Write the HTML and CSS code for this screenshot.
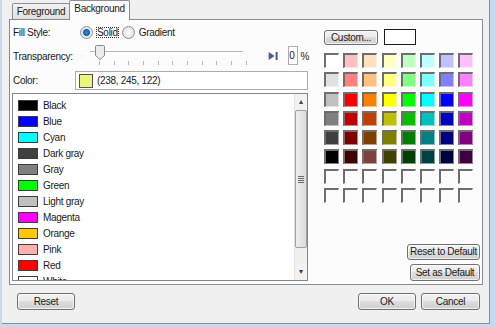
FILE: index.html
```html
<!DOCTYPE html>
<html lang="en">
<head>
    <meta charset="UTF-8">
    <title>Fill settings</title>
    <link rel="stylesheet" href="styles.css">
</head>
<body>
<div class="frame">
    <div class="dialog">
        <div class="tabs">
            <div class="tab">Foreground</div>
            <div class="tab active">Background</div>
        </div>

        <div class="pane">
            <div class="left">
                <div class="row fill">
                    <span class="label">Fill Style:</span>
                    <span class="radio on"></span>
                    <span class="opt focus">Solid</span>
                    <span class="radio"></span>
                    <span class="opt">Gradient</span>
                </div>

                <div class="row trans">
                    <span class="label">Transparency:</span>
                    <svg class="end" width="9" height="8" viewBox="0 0 9 8">
                        <rect x="0" y="0" width="2" height="8" fill="#a8a8a8"/>
                        <polygon points="9,0 9,8 3,4" fill="#a8a8a8"/>
                    </svg>
                    <div class="slider">
                        <div class="track"></div>
                        <svg class="thumb" width="10" height="15" viewBox="0 0 10 15">
                            <path d="M0.5 1.5 Q0.5 0.5 1.5 0.5 L8.5 0.5 Q9.5 0.5 9.5 1.5 L9.5 10.5 L5 14.5 L0.5 10.5 Z" fill="#ececec" stroke="#8a8a8a"/>
                        </svg>
                        <div class="ticks">
                            <i></i><i></i><i></i><i></i><i></i><i></i><i></i><i></i><i></i><i></i><i></i>
                        </div>
                    </div>
                    <svg class="end right" width="9" height="8" viewBox="0 0 9 8">
                        <polygon points="0,0 0,8 6,4" fill="#4f5b8c"/>
                        <rect x="7" y="0" width="2" height="8" fill="#4f5b8c"/>
                    </svg>
                    <div class="num">0</div>
                    <span class="pct">%</span>
                </div>

                <div class="row color">
                    <span class="label">Color:</span>
                    <div class="colorbox">
                        <span class="chip" style="background: rgb(238, 245, 122)"></span>
                        <span>(238, 245, 122)</span>
                    </div>
                </div>

                <div class="list">
                    <div class="items">
                        <div class="item"><span class="sw" style="background:#000000"></span>Black</div>
                        <div class="item"><span class="sw" style="background:#0000ff"></span>Blue</div>
                        <div class="item"><span class="sw" style="background:#00ffff"></span>Cyan</div>
                        <div class="item"><span class="sw" style="background:#404040"></span>Dark gray</div>
                        <div class="item"><span class="sw" style="background:#808080"></span>Gray</div>
                        <div class="item"><span class="sw" style="background:#00ff00"></span>Green</div>
                        <div class="item"><span class="sw" style="background:#c0c0c0"></span>Light gray</div>
                        <div class="item"><span class="sw" style="background:#ff00ff"></span>Magenta</div>
                        <div class="item"><span class="sw" style="background:#ffc800"></span>Orange</div>
                        <div class="item"><span class="sw" style="background:#ffafaf"></span>Pink</div>
                        <div class="item"><span class="sw" style="background:#ff0000"></span>Red</div>
                        <div class="item"><span class="sw" style="background:#ffffff"></span>White</div>
                    </div>
                    <div class="scroll">
                        <div class="arrow">&#9652;</div>
                        <div class="sthumb"><span class="grip"></span></div>
                        <div class="strack"></div>
                        <div class="arrow">&#9662;</div>
                    </div>
                </div>
            </div>

            <div class="right">
                <div class="custom">
                    <div class="btn small">Custom...</div>
                    <div class="preview"></div>
                </div>

                <div class="palette">
                    <span style="background:#ffffff"></span><span style="background:#ffc0c0"></span><span style="background:#ffe0c0"></span><span style="background:#ffffc0"></span><span style="background:#c0ffc0"></span><span style="background:#c0ffff"></span><span style="background:#c0c0ff"></span><span style="background:#ffc0ff"></span>
                    <span style="background:#e0e0e0"></span><span style="background:#ff8080"></span><span style="background:#ffc080"></span><span style="background:#ffff80"></span><span style="background:#80ff80"></span><span style="background:#80ffff"></span><span style="background:#8080ff"></span><span style="background:#ff80ff"></span>
                    <span style="background:#c0c0c0"></span><span style="background:#ff0000"></span><span style="background:#ff8000"></span><span style="background:#ffff00"></span><span style="background:#00ff00"></span><span style="background:#00ffff"></span><span style="background:#0000ff"></span><span style="background:#ff00ff"></span>
                    <span style="background:#808080"></span><span style="background:#c00000"></span><span style="background:#c04000"></span><span style="background:#c0c000"></span><span style="background:#00c000"></span><span style="background:#00c0c0"></span><span style="background:#0000c0"></span><span style="background:#c000c0"></span>
                    <span style="background:#404040"></span><span style="background:#800000"></span><span style="background:#804000"></span><span style="background:#808000"></span><span style="background:#008000"></span><span style="background:#008080"></span><span style="background:#000080"></span><span style="background:#800080"></span>
                    <span style="background:#000000"></span><span style="background:#400000"></span><span style="background:#804040"></span><span style="background:#404000"></span><span style="background:#004000"></span><span style="background:#004040"></span><span style="background:#000040"></span><span style="background:#400040"></span>
                    <span></span><span></span><span></span><span></span><span></span><span></span><span></span><span></span>
                    <span></span><span></span><span></span><span></span><span></span><span></span><span></span><span></span>
                </div>

                <div class="defaults">
                    <div class="btn def1">Reset to Default</div>
                    <div class="btn def2">Set as Default</div>
                </div>
            </div>
        </div>

        <div class="bottom">
            <div class="btn wide">Reset</div>
            <div class="spacer"></div>
            <div class="btn wide">OK</div>
            <div class="btn wide cancel">Cancel</div>
        </div>
    </div>
</div>
</body>
</html>
```

FILE: styles.css
```css
* {
    margin: 0;
    padding: 0;
    box-sizing: border-box;
}

body {
    width: 496px;
    height: 327px;
    overflow: hidden;
    background: #c7d9ee;
    font-family: "Liberation Sans", Arial, sans-serif;
    font-size: 10px;
    letter-spacing: -0.3px;
    color: #1a1a1a;
}

.frame {
    padding-left: 2px;
}

.dialog {
    width: 488px;
    height: 324px;
    background: #f0f0f0;
    border-right: 1px solid #7f8fa6;
    border-bottom: 1px solid #7f8fa6;
    display: flex;
    flex-direction: column;
}

/* tabs */
.tabs {
    display: flex;
    align-items: flex-end;
    height: 19px;
    padding-left: 10px;
}

.tab {
    width: 58px;
    height: 16px;
    border: 1px solid #8c8e94;
    border-bottom: 0;
    border-radius: 2px 2px 0 0;
    background: linear-gradient(#f2f2f2, #e0e0e0);
    text-align: center;
    line-height: 16px;
}

.tab.active {
    width: 61px;
    height: 20px;
    margin-bottom: -1px;
    margin-left: -1px;
    background: #fcfcfc;
    line-height: 15px;
    position: relative;
}

/* main pane */
.pane {
    margin-left: 7px;
    width: 474px;
    height: 266px;
    border: 1px solid #898c95;
    background: #fcfcfc;
    display: flex;
}

.left {
    width: 299px;
    padding-left: 2px;
}

.row {
    display: flex;
    align-items: center;
}

.label {
    width: 68px;
    padding-left: 1px;
    flex-shrink: 0;
}

.fill {
    margin-top: 5px;
    height: 14px;
}

.radio {
    width: 13px;
    height: 13px;
    border-radius: 50%;
    border: 1px solid #8e8f8f;
    background: radial-gradient(circle, #ffffff, #d6d6d6);
    margin-right: 3px;
}

.radio.on {
    background: radial-gradient(circle, #3b8ed4 0, #1f5fa0 3px, #d8e6f2 4px, #f4f4f4 6px);
}

.opt {
    padding: 0 1px;
    margin-right: 3px;
}

.opt.focus {
    outline: 1px dotted #333;
    outline-offset: -1px;
}

.trans {
    margin-top: 5px;
    height: 22px;
    align-items: flex-start;
}

.trans .label {
    margin-top: 7px;
    width: 69px;
}

.end {
    margin-top: 8px;
}

.slider {
    width: 163px;
    height: 22px;
    margin: 0 3px;
    position: relative;
}

.track {
    margin: 7px 0 0 5px;
    width: 153px;
    height: 2px;
    border-top: 1px solid #b4b4b4;
    border-bottom: 1px solid #ffffff;
}

.thumb {
    position: absolute;
    left: 10px;
    top: 1px;
}

.ticks {
    display: flex;
    justify-content: space-between;
    margin: 8px 0 0 14px;
    width: 148px;
}

.ticks i {
    width: 1px;
    height: 4px;
    background: #b8b8b8;
}

.num {
    margin-left: 7px;
    margin-top: 2px;
    width: 28px;
    height: 19px;
    border: 1px solid #abadb3;
    background: #fff;
    text-align: right;
    padding-right: 3px;
    line-height: 17px;
}

.pct {
    margin-top: 7px;
    margin-left: 2px;
}

.color {
    margin-top: 5px;
    height: 19px;
}

.color .label {
    width: 63px;
}

.colorbox {
    width: 233px;
    height: 19px;
    border: 1px solid #abadb3;
    background: #fff;
    display: flex;
    align-items: center;
    padding-left: 3px;
}

.chip {
    width: 14px;
    height: 14px;
    border: 1px solid #555;
    margin-right: 4px;
}

/* colour list */
.list {
    margin-top: 3px;
    width: 296px;
    height: 188px;
    border: 1px solid #828790;
    background: #fff;
    display: flex;
    overflow: hidden;
}

.items {
    flex: 1;
    padding: 3px 0 0 5px;
}

.item {
    height: 16px;
    display: flex;
    align-items: center;
}

.sw {
    width: 20px;
    height: 11px;
    border: 1px solid #3c3c3c;
    margin-right: 5px;
}

.scroll {
    width: 13px;
    display: flex;
    flex-direction: column;
    background: #ececec;
    border-left: 1px solid #e4e4e4;
}

.arrow {
    height: 16px;
    font-size: 8px;
    text-align: center;
    line-height: 15px;
    color: #404040;
    background: #f2f2f2;
}

.sthumb {
    height: 138px;
    border: 1px solid #a0a0a0;
    border-radius: 2px;
    background: linear-gradient(to right, #eeeeee, #dcdcdc);
    display: flex;
    align-items: center;
    justify-content: center;
}

.grip {
    width: 6px;
    height: 7px;
    background: repeating-linear-gradient(#6a6a6a 0, #6a6a6a 1px, transparent 1px, transparent 2px);
}

.strack {
    flex: 1;
    background: #f0f0f0;
}

/* right side */
.right {
    margin-left: 15px;
    width: 156px;
    display: flex;
    flex-direction: column;
}

.custom {
    margin-top: 9px;
    display: flex;
    align-items: center;
}

.btn {
    border: 1px solid #707070;
    border-radius: 3px;
    background: linear-gradient(#f2f2f2 0, #ebebeb 45%, #dddddd 50%, #cfcfcf 100%);
    text-align: center;
    white-space: nowrap;
    box-shadow: inset 0 0 0 1px rgba(255, 255, 255, 0.7);
}

.btn.small {
    width: 54px;
    height: 15px;
    line-height: 13px;
}

.preview {
    margin-left: 6px;
    width: 32px;
    height: 16px;
    border: 1px solid #1a1a1a;
    background: #fff;
}

.palette {
    margin-top: 8px;
    display: grid;
    grid-template-columns: repeat(8, 15px);
    grid-auto-rows: 15px;
    column-gap: 4.2px;
    row-gap: 4.3px;
}

.palette span {
    border-top: 2px solid #6e6e6e;
    border-left: 2px solid #6e6e6e;
    border-right: 1px solid rgba(255, 255, 255, 0.5);
    border-bottom: 1px solid rgba(255, 255, 255, 0.5);
}

.defaults {
    margin-top: auto;
    margin-bottom: 3px;
    display: flex;
    flex-direction: column;
    align-items: flex-end;
}

.def1 {
    width: 73px;
    height: 16px;
    line-height: 14px;
}

.def2 {
    margin-top: 4px;
    width: 70px;
    height: 17px;
    line-height: 15px;
}

/* dialog buttons */
.bottom {
    display: flex;
    padding: 8px 9px 0 15px;
}

.btn.wide {
    width: 58px;
    height: 17px;
    line-height: 15px;
}

.spacer {
    flex: 1;
}

.btn.cancel {
    margin-left: 5px;
    width: 59px;
}
```
